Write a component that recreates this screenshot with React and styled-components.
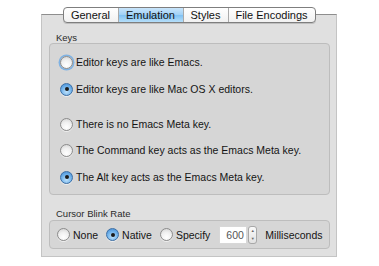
import React from 'react'
import styled, { createGlobalStyle } from 'styled-components'

const Global = createGlobalStyle`
  body {
    margin: 0;
    background: #ffffff;
    font-family: "Liberation Sans", "DejaVu Sans", sans-serif;
    color: #1a1a1a;
  }
`

const Page = styled.div`
  width: 379px;
  height: 266px;
  padding: 14px 0 0 41px;
  box-sizing: border-box;
`

const Panel = styled.div`
  width: 296px;
  height: 243px;
  box-sizing: border-box;
  background: #e0e0e0;
  border: 1px solid #c4c4c4;
  border-top-color: #8e8e8e;
  display: flex;
  flex-direction: column;
  align-items: center;
`

const TabBar = styled.div`
  display: flex;
  margin-top: -8px;
  height: 14px;
  border: 1px solid #7e7e7e;
  border-radius: 4px;
  background: linear-gradient(#ffffff, #f1f1f1);
  overflow: hidden;
  box-shadow: 0 1px 0 rgba(0,0,0,0.15);
`

const Tab = styled.div`
  width: ${({w}) => w}px;
  display: flex;
  align-items: center;
  justify-content: center;
  font-size: 11px;
  color: #111;
  border-left: ${({first}) => first ? 'none' : '1px solid #a9a9a9'};
  background: ${({active}) => active ? 'linear-gradient(#c9e5fb 0%, #9fd0f6 50%, #7fc1f3 51%, #b5def9 100%)' : 'transparent'};
`

const Content = styled.div`
  align-self: stretch;
  padding: 9px 6px 0 7px;
  display: flex;
  flex-direction: column;
`

const GroupLabel = styled.div`
  font-size: 9.5px;
  color: #2a2a2a;
  margin-left: 7px;
  margin-top: ${({mt}) => mt || 0}px;
  height: 11px;
  line-height: 11px;
`

const GroupBox = styled.div`
  background: #d6d6d6;
  border: 1px solid #bdbdbd;
  border-radius: 4px;
  box-sizing: border-box;
  height: ${({h}) => h}px;
  margin-top: ${({mt}) => mt}px;
  display: flex;
  flex-direction: ${({row}) => row ? 'row' : 'column'};
  align-items: ${({row}) => row ? 'center' : 'stretch'};
  padding: ${({pad}) => pad};
`

const Option = styled.label`
  display: flex;
  flex: none;
  align-items: center;
  height: 14px;
  margin-top: ${({mt}) => mt || 0}px;
  margin-right: ${({mr}) => mr || 0}px;
  font-size: 10.5px;
  color: #141414;
  gap: 3px;
  white-space: nowrap;
`

const Dot = styled.span`
  width: 13px;
  height: 13px;
  box-sizing: border-box;
  border-radius: 50%;
  flex: none;
  display: flex;
  align-items: center;
  justify-content: center;
  border: 1px solid ${({on}) => on ? '#3c6fa5' : '#8c8c8c'};
  background: ${({on}) => on
    ? 'radial-gradient(circle at 50% 70%, #bfe2fb 0%, #6fb1ea 55%, #3f86d0 100%)'
    : 'radial-gradient(circle at 50% 75%, #ffffff 0%, #f0f0f0 50%, #cfcfcf 100%)'};
  box-shadow: ${({focus}) => focus ? '0 0 0 1.5px #7fb2e3' : '0 1px 0 rgba(255,255,255,0.6)'};

  &::after {
    content: '';
    display: ${({on}) => on ? 'block' : 'none'};
    width: 4px;
    height: 4px;
    border-radius: 50%;
    background: #1a1a1a;
  }
`

const NumberField = styled.div`
  flex: none;
  width: 28px;
  height: 18px;
  background: #ffffff;
  box-sizing: border-box;
  border: 1px solid #d8d8d8;
  font-size: 10.5px;
  color: #555;
  display: flex;
  align-items: center;
  padding-left: 6px;
`

const Stepper = styled.div`
  flex: none;
  width: 7px;
  height: 16px;
  margin-left: 1px;
  border: 1px solid #a8a8a8;
  border-radius: 3px;
  background: linear-gradient(#fafafa, #e2e2e2);
  display: flex;
  flex-direction: column;
  align-items: center;
  justify-content: space-around;
  font-size: 4px;
  line-height: 4px;
  color: #666;
`

const Units = styled.span`
  flex: none;
  font-size: 10.5px;
  color: #141414;
  margin-left: 8px;
`

const Radio = ({on, focus, children, mt, mr}) => (
  <Option mt={mt} mr={mr}>
    <Dot on={on} focus={focus} />
    {children}
  </Option>
)

export default function App() {
  return (
    <>
      <Global />
      <Page>
        <Panel>
          <TabBar>
            <Tab first w={54}>General</Tab>
            <Tab active w={64}>Emulation</Tab>
            <Tab w={44}>Styles</Tab>
            <Tab w={86}>File Encodings</Tab>
          </TabBar>
          <Content>
            <GroupLabel>Keys</GroupLabel>
            <GroupBox h={152} mt={0} pad="11px 0 0 10px">
              <Radio focus>Editor keys are like Emacs.</Radio>
              <Radio on mt={13}>Editor keys are like Mac OS X editors.</Radio>
              <Radio mt={21}>There is no Emacs Meta key.</Radio>
              <Radio mt={12}>The Command key acts as the Emacs Meta key.</Radio>
              <Radio on mt={13}>The Alt key acts as the Emacs Meta key.</Radio>
            </GroupBox>
            <GroupLabel mt={13}>Cursor Blink Rate</GroupLabel>
            <GroupBox row h={29} mt={1} pad="0 0 0 7px">
              <Radio mr={8}>None</Radio>
              <Radio on mr={8}>Native</Radio>
              <Radio mr={9}>Specify</Radio>
              <NumberField>600</NumberField>
              <Stepper><span>▲</span><span>▼</span></Stepper>
              <Units>Milliseconds</Units>
            </GroupBox>
          </Content>
        </Panel>
      </Page>
    </>
  )
}
